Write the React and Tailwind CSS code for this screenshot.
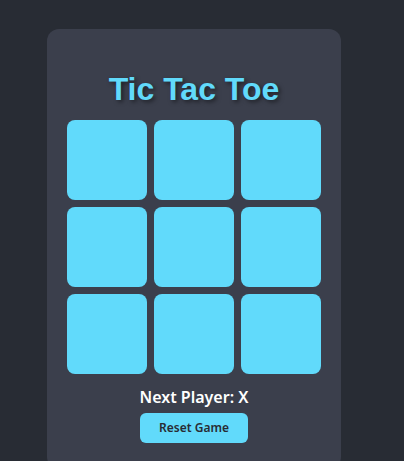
import React, { useState } from 'react';

const Square = ({ value, onClick }) => (
  <button
    onClick={onClick}
    className="w-20 h-20 rounded-lg bg-[#61dafb] text-[#282c34] text-4xl font-bold flex items-center justify-center"
  >
    {value}
  </button>
);

export default function App() {
  const [squares, setSquares] = useState(Array(9).fill(null));
  const [xIsNext, setXIsNext] = useState(true);

  const handleClick = (i) => {
    if (squares[i]) return;
    const next = squares.slice();
    next[i] = xIsNext ? 'X' : 'O';
    setSquares(next);
    setXIsNext(!xIsNext);
  };

  const reset = () => {
    setSquares(Array(9).fill(null));
    setXIsNext(true);
  };

  return (
    <div className="min-h-[461px] w-full bg-[#282c34] pt-[29px] pl-[47px]">
      <div className="w-[294px] h-[440px] rounded-xl bg-[#3b3f4c] px-5 pt-[42px] flex flex-col items-center">
        <h1
          className="text-[32px] leading-[37px] font-bold text-[#61dafb] mb-3 [text-shadow:2px_2px_4px_rgba(0,0,0,0.5)]"
          style={{ fontFamily: '"Liberation Sans", Arial, sans-serif' }}
        >
          Tic Tac Toe
        </h1>

        <div className="grid grid-cols-3 gap-[7px] w-full">
          {squares.map((value, i) => (
            <Square key={i} value={value} onClick={() => handleClick(i)} />
          ))}
        </div>

        <div
          className="mt-[12px] text-white text-[16px] leading-[22px] font-semibold"
          style={{ fontFamily: '"Noto Sans", sans-serif' }}
        >
          Next Player: {xIsNext ? 'X' : 'O'}
        </div>
        <button
          onClick={reset}
          className="mt-[5px] w-[108px] h-[30px] rounded-md bg-[#61dafb] text-[#282c34] text-[12px] font-semibold"
          style={{ fontFamily: '"Noto Sans", sans-serif' }}
        >
          Reset Game
        </button>
      </div>
    </div>
  );
}
